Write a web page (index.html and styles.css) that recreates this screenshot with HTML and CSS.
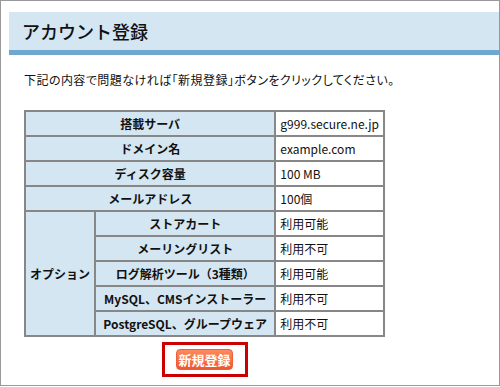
FILE: index.html
```html
<!DOCTYPE html>
<html lang="ja">
<head>
  <meta charset="UTF-8">
  <title>アカウント登録</title>
  <link rel="stylesheet" href="styles.css">
</head>
<body>
  <div class="page">
    <h1 class="title">アカウント登録</h1>
    <p class="intro">下記の内容で問題なければ「新規登録」ボタンをクリックしてください。</p>

    <div class="confirm">
      <table class="info">
        <tr>
          <th colspan="2">搭載サーバ</th>
          <td>g999.secure.ne.jp</td>
        </tr>
        <tr>
          <th colspan="2">ドメイン名</th>
          <td>example.com</td>
        </tr>
        <tr>
          <th colspan="2">ディスク容量</th>
          <td>100 MB</td>
        </tr>
        <tr>
          <th colspan="2">メールアドレス</th>
          <td>100個</td>
        </tr>
        <tr>
          <th rowspan="5" class="group">オプション</th>
          <th>ストアカート</th>
          <td>利用可能</td>
        </tr>
        <tr>
          <th>メーリングリスト</th>
          <td>利用不可</td>
        </tr>
        <tr>
          <th>ログ解析ツール（3種類）</th>
          <td>利用可能</td>
        </tr>
        <tr>
          <th>MySQL、CMSインストーラー</th>
          <td>利用不可</td>
        </tr>
        <tr>
          <th>PostgreSQL、グループウェア</th>
          <td>利用不可</td>
        </tr>
      </table>

      <div class="submit-wrap">
        <div class="submit-box">
          <button type="button" class="btn-submit">新規登録</button>
        </div>
      </div>
    </div>
  </div>
</body>
</html>
```

FILE: styles.css
```css
:root {
  --head-bg: #d4e6f2;
  --stripe: #6fa8cf;
  --line: #878787;
  --text: #111;
}
*, *::before, *::after { box-sizing: border-box; }
body {
  margin: 0;
  background: #fff;
  color: var(--text);
  font-family: "Noto Sans CJK JP", "Noto Sans", sans-serif;
}

.page {
  width: 500px;
  height: 386px;
  border: 1px solid #999;
  overflow: hidden;
}

.title {
  margin: 11px 0 0 8px;
  height: 43px;
  padding-left: 13px;
  background: var(--head-bg);
  border-bottom: 5px solid var(--stripe);
  font-size: 18px;
  font-weight: 500;
  line-height: 38px;
}

.intro {
  margin: 16px 0 0 23px;
  font-size: 12px;
  line-height: 18px;
  letter-spacing: 0.45px;
  font-feature-settings: "palt";
}

.confirm {
  width: 361px;
  margin: 21px 0 0 23px;
}

.info {
  width: 100%;
  border-collapse: collapse;
  font-size: 12px;
}
.info th,
.info td {
  height: 25px;
  padding: 0 4px;
  border: 2px solid var(--line);
  line-height: 16px;
  white-space: nowrap;
}
.info th {
  background: var(--head-bg);
  text-align: center;
  font-weight: bold;
}
.info th.group { width: 69px; }
.info td {
  width: 107px;
  text-align: left;
}

.submit-wrap {
  display: flex;
  justify-content: center;
  margin-top: 5px;
}
.submit-box {
  width: 86px;
  height: 35px;
  border: 3px solid #cc0000;
  display: flex;
  align-items: center;
  justify-content: center;
}
.btn-submit {
  width: 57px;
  height: 21px;
  padding: 0;
  border: 1px solid #e9603a;
  border-radius: 4px;
  background: linear-gradient(#ff8a5e, #f1562c);
  color: #fff;
  font-family: inherit;
  font-size: 13px;
  font-weight: bold;
  line-height: 19px;
  cursor: pointer;
}
```
